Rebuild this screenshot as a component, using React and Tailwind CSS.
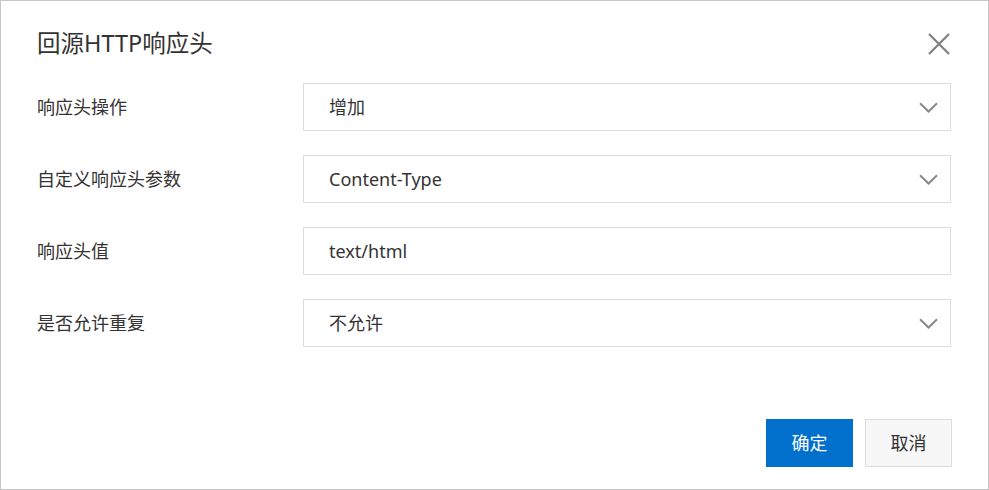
import React from "react";

const font = { fontFamily: '"Noto Sans", "Noto Sans CJK SC", sans-serif' };

function Chevron() {
  return (
    <svg width="19" height="11" viewBox="0 0 19 11" fill="none">
      <path d="M1 1.2 L9.5 9.5 L18 1.2" stroke="#888" strokeWidth="2" />
    </svg>
  );
}

function Row({ label, value, select }) {
  return (
    <div className="flex items-center h-[48px]">
      <div className="w-[266px] text-[18px] text-[#333]">{label}</div>
      <div className="flex-1 h-[48px] border border-[#dcdcdc] flex items-center justify-between pl-[25px] pr-[12px] text-[18px] text-[#333]">
        <span>{value}</span>
        {select && <Chevron />}
      </div>
    </div>
  );
}

export default function App() {
  return (
    <div
      className="w-[989px] h-[490px] border border-[#c6c6c6] bg-white flex flex-col"
      style={font}
    >
      <div className="h-[82px] pl-[36px] pr-[37px] pt-[22px] flex justify-between items-start shrink-0">
        <div className="text-[23.5px] leading-[40px] text-[#333]">回源HTTP响应头</div>
        <svg className="mt-[10px] mr-[1px]" width="22" height="22" viewBox="0 0 22 22">
          <path d="M1 1 L21 21 M21 1 L1 21" stroke="#808080" strokeWidth="2.2" />
        </svg>
      </div>
      <div className="pl-[36px] pr-[37px] flex flex-col gap-[24px]">
        <Row label="响应头操作" value="增加" select />
        <Row label="自定义响应头参数" value="Content-Type" select />
        <Row label="响应头值" value="text/html" />
        <Row label="是否允许重复" value="不允许" select />
      </div>
      <div className="flex justify-end gap-[12px] pr-[36px] mt-[72px]">
        <button className="w-[87px] h-[48px] bg-[#0070cc] text-white text-[18px]">确定</button>
        <button className="w-[87px] h-[48px] bg-[#f7f7f7] border border-[#dcdcdc] text-[#333] text-[18px]">取消</button>
      </div>
    </div>
  );
}
